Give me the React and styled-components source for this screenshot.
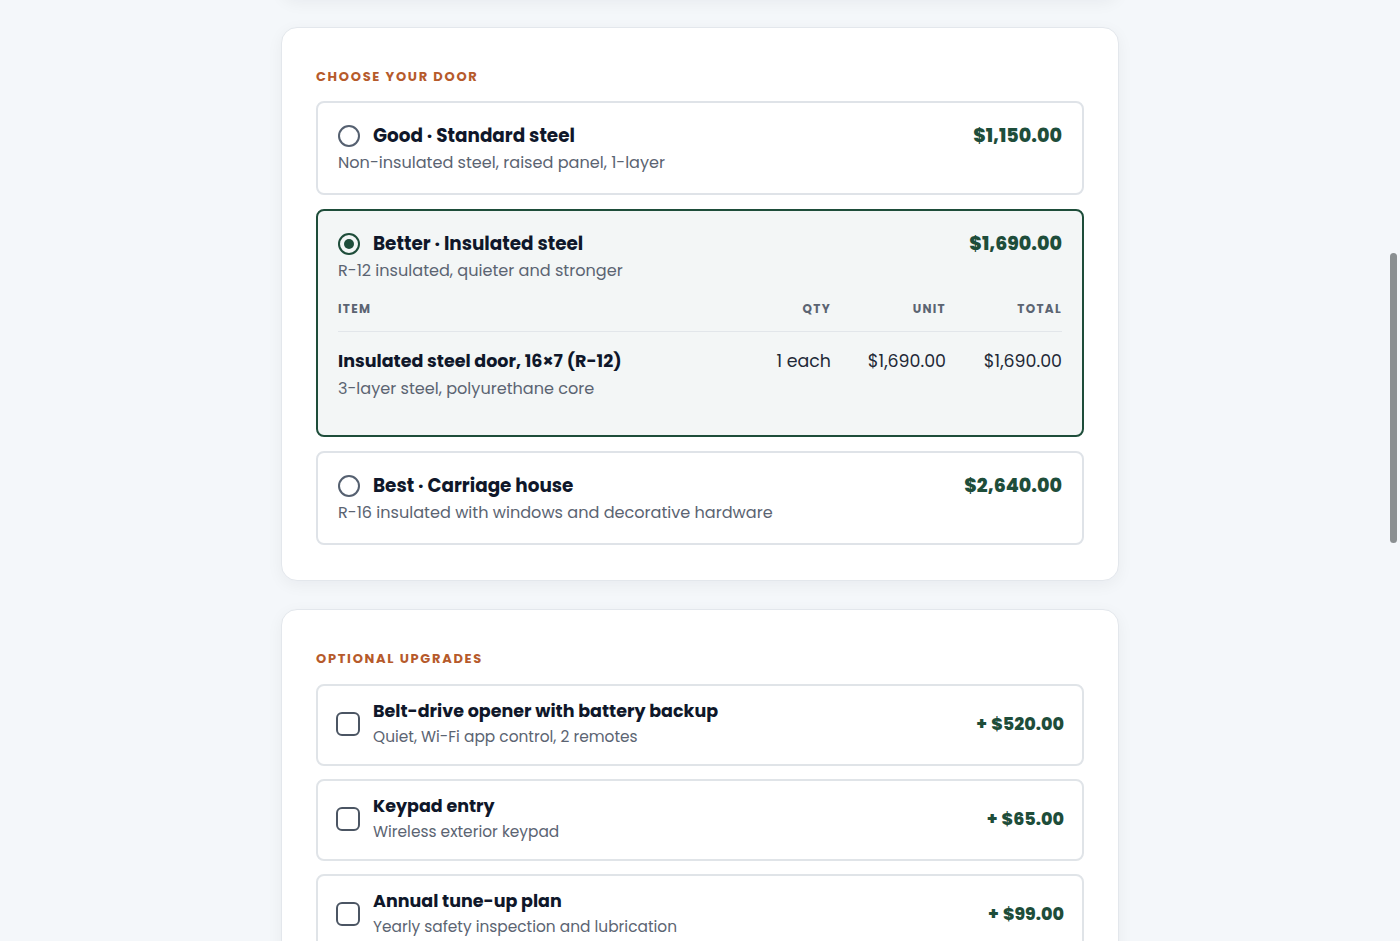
import React from "react";
import styled, { createGlobalStyle } from "styled-components";

const GlobalStyle = createGlobalStyle`
  html, body {
    margin: 0;
    padding: 0;
    overflow: hidden;
    background-color: #f4f7fa;
    font-family: Poppins, Inter, "Noto Sans", sans-serif;
    color: #0f172a;
  }
  * {
    box-sizing: border-box;
  }
`;

const Page = styled.div`
  width: 838px;
  margin: 0 auto;
  display: flex;
  flex-direction: column;
  gap: 28px;
`;

const Card = styled.section`
  background-color: #ffffff;
  border: 1px solid #e3e7ec;
  border-radius: 16px;
  box-shadow: 0 4px 16px rgba(15, 23, 42, 0.05);
  padding: 39px 34px ${(p) => p.$bottom || 35}px;
`;

const PrevCard = styled(Card)`
  height: 40px;
  margin-top: -41px;
  padding: 0;
`;

const Label = styled.h3`
  margin: 0 0 ${(p) => p.$gap}px;
  font-size: 13px;
  line-height: 20px;
  font-weight: 700;
  letter-spacing: 1.7px;
  text-transform: uppercase;
  color: #b65a2b;
`;

const List = styled.div`
  display: flex;
  flex-direction: column;
  gap: ${(p) => p.$gap}px;
`;

const Option = styled.div`
  border: 2px solid ${(p) => (p.$selected ? "#1e4d3a" : "#dfe3e8")};
  background-color: ${(p) => (p.$selected ? "#f3f6f6" : "#ffffff")};
  border-radius: 8px;
  padding: 20px 20px 18px;
`;

const OptionHead = styled.div`
  display: flex;
  align-items: center;
  justify-content: space-between;
`;

const TitleGroup = styled.div`
  display: flex;
  align-items: center;
  gap: 13px;
`;

const Radio = styled.span`
  width: 22px;
  height: 22px;
  border-radius: 50%;
  border: 2px solid ${(p) => (p.$checked ? "#1e4d3a" : "#556070")};
  display: flex;
  align-items: center;
  justify-content: center;

  &::after {
    content: "";
    width: 10px;
    height: 10px;
    border-radius: 50%;
    background-color: ${(p) => (p.$checked ? "#1e4d3a" : "transparent")};
  }
`;

const Title = styled.span`
  font-size: 18.4px;
  line-height: 26px;
  font-weight: 700;
  color: #0f172a;
`;

const Price = styled.span`
  font-size: 19px;
  line-height: 26px;
  font-weight: 800;
  color: #1e4d3a;
`;

const Desc = styled.p`
  margin: 2px 0 0;
  font-size: 16.1px;
  line-height: 24px;
  color: #5b6472;
`;

const Table = styled.div`
  margin-top: 18px;
  padding-bottom: 16px;
`;

const TableRow = styled.div`
  display: grid;
  grid-template-columns: 1fr 110px 115px 116px;
  align-items: ${(p) => (p.$head ? "center" : "start")};
  padding: ${(p) => (p.$head ? "0 0 14px" : "17px 0 0")};
  border-bottom: ${(p) => (p.$head ? "1px solid #e2e6ea" : "none")};
`;

const HeadCell = styled.span`
  font-size: 12px;
  line-height: 16px;
  font-weight: 700;
  letter-spacing: 1.3px;
  color: #5b6472;
  text-align: ${(p) => (p.$left ? "left" : "right")};
`;

const ItemName = styled.div`
  font-size: 17.5px;
  line-height: 24px;
  font-weight: 700;
  color: #0f172a;
`;

const ItemNote = styled.div`
  margin-top: 4px;
  font-size: 16.1px;
  line-height: 24px;
  color: #5b6472;
`;

const Cell = styled.span`
  font-size: 17.4px;
  line-height: 24px;
  color: #1f2937;
  text-align: right;
`;

const Upgrade = styled.div`
  border: 2px solid #e0e4e8;
  border-radius: 8px;
  padding: 13px 18px 16px;
  display: flex;
  align-items: center;
  gap: 13px;
  background-color: #ffffff;
`;

const Checkbox = styled.span`
  flex: none;
  width: 24px;
  height: 24px;
  border: 2px solid #4b5563;
  border-radius: 6px;
`;

const UpgradeText = styled.div`
  flex: 1;
`;

const UpgradeTitle = styled.div`
  font-size: 17.5px;
  line-height: 24px;
  font-weight: 700;
  color: #0f172a;
`;

const UpgradeDesc = styled.div`
  margin-top: 3px;
  font-size: 15.4px;
  line-height: 22px;
  color: #5b6472;
`;

const UpgradePrice = styled.span`
  font-size: 17.5px;
  line-height: 24px;
  font-weight: 800;
  color: #1e4d3a;
  word-spacing: 1px;
`;

const ScrollThumb = styled.div`
  position: fixed;
  right: 3px;
  top: 253px;
  width: 7px;
  height: 290px;
  border-radius: 4px;
  background-color: #8a8f91;
`;

const doors = [
  {
    name: "Good · Standard steel",
    desc: "Non-insulated steel, raised panel, 1-layer",
    price: "$1,150.00",
  },
  {
    name: "Better · Insulated steel",
    desc: "R-12 insulated, quieter and stronger",
    price: "$1,690.00",
    selected: true,
    item: {
      name: "Insulated steel door, 16×7 (R-12)",
      note: "3-layer steel, polyurethane core",
      qty: "1 each",
      unit: "$1,690.00",
      total: "$1,690.00",
    },
  },
  {
    name: "Best · Carriage house",
    desc: "R-16 insulated with windows and decorative hardware",
    price: "$2,640.00",
  },
];

const upgrades = [
  {
    name: "Belt-drive opener with battery backup",
    desc: "Quiet, Wi-Fi app control, 2 remotes",
    price: "+ $520.00",
  },
  { name: "Keypad entry", desc: "Wireless exterior keypad", price: "+ $65.00" },
  {
    name: "Annual tune-up plan",
    desc: "Yearly safety inspection and lubrication",
    price: "+ $99.00",
  },
];

const App = () => (
  <>
    <GlobalStyle />
    <Page>
      <PrevCard />
      <Card $bottom={35}>
        <Label $gap={14}>Choose your door</Label>
        <List $gap={14}>
          {doors.map((d) => (
            <Option key={d.name} $selected={d.selected}>
              <OptionHead>
                <TitleGroup>
                  <Radio $checked={d.selected} />
                  <Title>{d.name}</Title>
                </TitleGroup>
                <Price>{d.price}</Price>
              </OptionHead>
              <Desc>{d.desc}</Desc>
              {d.item && (
                <Table>
                  <TableRow $head>
                    <HeadCell $left>ITEM</HeadCell>
                    <HeadCell>QTY</HeadCell>
                    <HeadCell>UNIT</HeadCell>
                    <HeadCell>TOTAL</HeadCell>
                  </TableRow>
                  <TableRow>
                    <div>
                      <ItemName>{d.item.name}</ItemName>
                      <ItemNote>{d.item.note}</ItemNote>
                    </div>
                    <Cell>{d.item.qty}</Cell>
                    <Cell>{d.item.unit}</Cell>
                    <Cell>{d.item.total}</Cell>
                  </TableRow>
                </Table>
              )}
            </Option>
          ))}
        </List>
      </Card>
      <Card>
        <Label $gap={15}>Optional upgrades</Label>
        <List $gap={13}>
          {upgrades.map((u) => (
            <Upgrade key={u.name}>
              <Checkbox />
              <UpgradeText>
                <UpgradeTitle>{u.name}</UpgradeTitle>
                <UpgradeDesc>{u.desc}</UpgradeDesc>
              </UpgradeText>
              <UpgradePrice>{u.price}</UpgradePrice>
            </Upgrade>
          ))}
        </List>
      </Card>
    </Page>
    <ScrollThumb />
  </>
);

export default App;
